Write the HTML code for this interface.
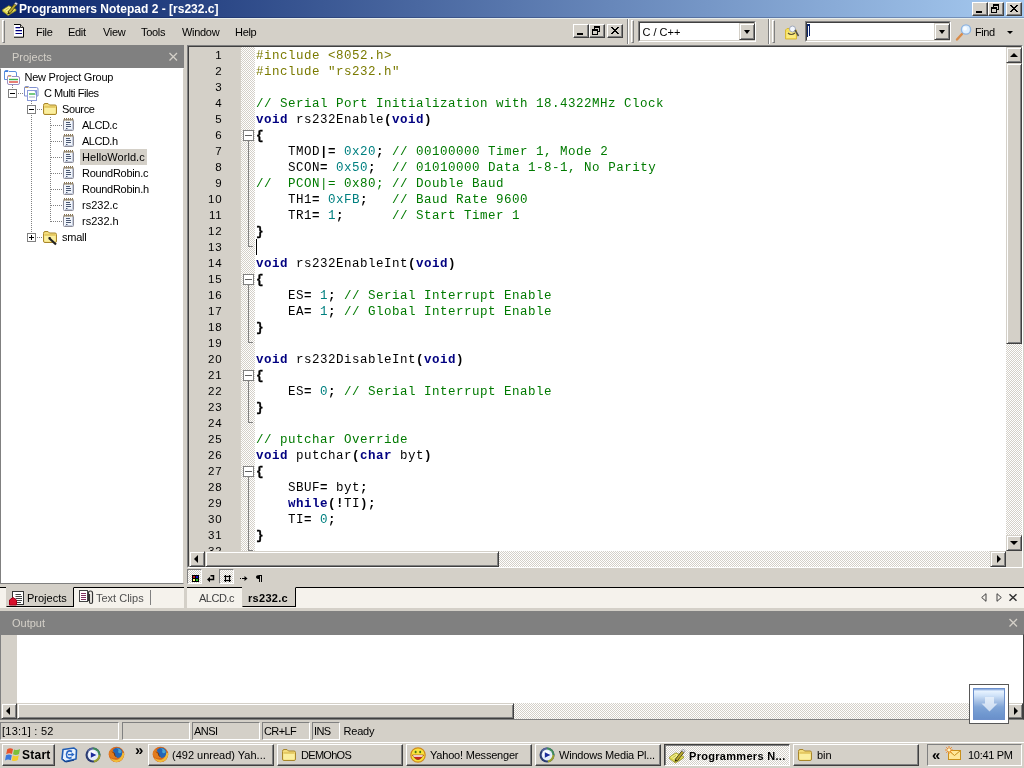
<!DOCTYPE html>
<html>
<head>
<meta charset="utf-8">
<title>Programmers Notepad 2 - [rs232.c]</title>
<style>
*{box-sizing:border-box;margin:0;padding:0}
html,body{width:1024px;height:768px;overflow:hidden;background:#d4d0c8}
body{font-family:"Liberation Sans",sans-serif;font-size:11px;color:#000;position:relative}
.a{position:absolute}
svg{position:absolute;overflow:visible}
.t{position:absolute;white-space:pre;line-height:14px;height:14px}
#title{left:0;top:0;width:1024px;height:18px;background:linear-gradient(90deg,#0a246a 0%,#a6caf0 100%)}
.btn{position:absolute;width:16px;height:14px;background:#d4d0c8;border:1px solid;border-color:#fff #404040 #404040 #fff;box-shadow:inset -1px -1px 0 #808080}
.sbtn{position:absolute;width:16px;height:16px;background:#d4d0c8;border:1px solid;border-color:#d4d0c8 #404040 #404040 #d4d0c8;box-shadow:inset 1px 1px 0 #fff,inset -1px -1px 0 #808080}
.chk{background-image:conic-gradient(#fff 25%,#d4d0c8 0 50%,#fff 0 75%,#d4d0c8 0);background-size:2px 2px}
.pane{position:absolute;top:722px;height:18px;border:1px solid;border-color:#808080 #fff #fff #808080}
.tb{position:absolute;top:744px;height:22px;background:#d4d0c8;border:1px solid;border-color:#fff #404040 #404040 #fff;box-shadow:inset -1px -1px 0 #808080}
.tb .t{top:4px;left:23px}
.grip{position:absolute;width:3px;border:1px solid;border-color:#fff #808080 #808080 #fff;background:#d4d0c8}
#code{left:256px;top:47.5px;font-family:"Liberation Mono",monospace;font-size:12.5px;letter-spacing:0.5px;line-height:16px;white-space:pre;color:#000}
#code .p{color:#7a7a00}
#code .c{color:#007a00}
#code .k{color:#000080;font-weight:bold}
#code .n{color:#008080}
#code b{font-weight:bold}
#code .br{-webkit-text-stroke:0.35px #000}
#ln{left:189px;top:47px;width:33.3px;text-align:right;font-size:11.5px;letter-spacing:0.7px;line-height:16px;white-space:pre}
.row{position:absolute;height:16px;line-height:16px;white-space:pre;font-size:11px;letter-spacing:-0.25px}
.dv{position:absolute;width:1px;background-image:linear-gradient(#808080 50%,transparent 0);background-size:1px 2px}
.dh{position:absolute;height:1px;background-image:linear-gradient(90deg,#808080 50%,transparent 0);background-size:2px 1px}
.box{position:absolute;width:9px;height:9px;border:1px solid #808080;background:#fff}
.box i{position:absolute;left:1px;top:3px;width:5px;height:1px;background:#000}
.box u{position:absolute;left:3px;top:1px;width:1px;height:5px;background:#000}
.fold{position:absolute;left:243px;width:11px;height:11px;border:1px solid #808080;background:#fff}
.fold i{position:absolute;left:1px;top:4px;width:7px;height:1px;background:#606060}
</style>
</head>
<body>
<div id="root" style="position:absolute;left:0;top:0;width:1024px;height:768px;will-change:transform">
<div id="title" class="a"><div class="a" style="left:0;top:17px;width:1024px;height:1px;background:rgba(10,20,70,0.28)"></div><svg style="left:2px;top:1px" width="15.5" height="15.5" viewBox="0 0 16 16">
<path d="M0.5 9 L7 4.8 L14.5 8.6 L14.5 10 L6.3 15 L0.5 10.6Z" fill="#dcd648" stroke="#8a8420" stroke-width=".7"/>
<path d="M1.6 9.1 L7 5.8 L13.2 8.8 L6.5 12.8Z" fill="#f4f08c"/>
<path d="M3.5 9.6 L7 7.4 M5.4 11 L9.8 8.3" stroke="#b4ae3c" stroke-width=".8"/>
<path d="M6.3 11.4 L12.8 2.9 L15 4.4 L8.4 12.9Z" fill="#b8a82e" stroke="#3a3410" stroke-width=".8"/>
<path d="M12.8 2.9 L14 1.2 L16.2 2.7 L15 4.4Z" fill="#e8e6f0" stroke="#6a6a7a" stroke-width=".5"/>
<path d="M6.3 11.4 L5.5 13.8 L8.4 12.9Z" fill="#2a2408"/>
</svg><div class="t" style="left:19px;top:2px;color:#fff;font-weight:bold;font-size:12px">Programmers Notepad 2 - [rs232.c]</div><div class="btn" style="left:972px;top:2px"><div class="a" style="left:3px;top:8px;width:6px;height:2px;background:#000"></div></div><div class="btn" style="left:988px;top:2px"><div class="a" style="left:4px;top:1px;width:6px;height:6px;border:1px solid #000;border-top-width:2px"></div><div class="a" style="left:2px;top:4px;width:6px;height:6px;border:1px solid #000;border-top-width:2px;background:#d4d0c8"></div></div><div class="btn" style="left:1006px;top:2px"><svg style="left:3px;top:2px" width="8" height="7" viewBox="0 0 8 7"><path d="M0.5 0 L7.5 7 M1.5 0 L8.5 7 M7.5 0 L0.5 7 M8.5 0 L1.5 7" stroke="#000" stroke-width="1" transform="translate(-0.5,0)"/></svg></div></div>
<div id="menubar" class="a" style="left:0;top:18px;width:1024px;height:27px;background:#d4d0c8"><div class="a" style="left:0;top:0;width:1024px;height:1px;background:#e9eeea"></div><div class="grip" style="left:2px;top:2px;height:23px"></div><svg style="left:14px;top:6px" width="11" height="14" viewBox="0 0 11 14"><path d="M0 0.5 H6.5 L9.5 3.5 V13 H0 Z" fill="#fff"/><path d="M0 0.5 H6.5 L9.5 3.5 V13.2 H0" fill="none" stroke="#000" stroke-width="1"/><path d="M6.5 0.5 V3.5 H9.5" fill="#d4d0c8" stroke="#000" stroke-width="0.8"/><path d="M1.5 3.7 H6 M1.5 6.6 H8 M1.5 9.5 H8" stroke="#000080" stroke-width="1.2"/></svg><div class="t" style="left:36px;top:7px;letter-spacing:-0.3px">File</div><div class="t" style="left:68px;top:7px;letter-spacing:-0.3px">Edit</div><div class="t" style="left:103px;top:7px;letter-spacing:-0.3px">View</div><div class="t" style="left:141px;top:7px;letter-spacing:-0.3px">Tools</div><div class="t" style="left:182px;top:7px;letter-spacing:-0.3px">Window</div><div class="t" style="left:235px;top:7px;letter-spacing:-0.3px">Help</div><div class="btn" style="left:573px;top:6px"><div class="a" style="left:3px;top:8px;width:6px;height:2px;background:#000"></div></div><div class="btn" style="left:589px;top:6px"><div class="a" style="left:4px;top:1px;width:6px;height:6px;border:1px solid #000;border-top-width:2px"></div><div class="a" style="left:2px;top:4px;width:6px;height:6px;border:1px solid #000;border-top-width:2px;background:#d4d0c8"></div></div><div class="btn" style="left:607px;top:6px"><svg style="left:3px;top:2px" width="8" height="7" viewBox="0 0 8 7"><path d="M0.5 0 L7.5 7 M1.5 0 L8.5 7 M7.5 0 L0.5 7 M8.5 0 L1.5 7" stroke="#000" stroke-width="1" transform="translate(-0.5,0)"/></svg></div><div class="a" style="left:627px;top:1px;width:2px;height:25px;border-left:1px solid #808080;border-right:1px solid #fff"></div><div class="grip" style="left:631px;top:2px;height:23px"></div><div class="a" style="left:768px;top:1px;width:2px;height:25px;border-left:1px solid #808080;border-right:1px solid #fff"></div><div class="grip" style="left:772px;top:2px;height:23px"></div><div class="a" style="left:638px;top:3px;width:118px;height:21px;background:#fff;border:1px solid;border-color:#808080 #fff #fff #808080"><div class="a" style="left:0;top:0;right:0;bottom:0;border:1px solid;border-color:#404040 #d4d0c8 #d4d0c8 #404040"></div><div class="t" style="left:3.5px;top:3px">C / C++</div><div class="sbtn" style="right:0px;top:1px;width:16px;height:17px"><div class="a" style="left:4px;top:6px;width:0;height:0;border:3.5px solid transparent;border-top:4px solid #000;border-bottom:0"></div></div></div><div class="a" style="left:805px;top:3px;width:146px;height:21px;background:#fff;border:1px solid;border-color:#808080 #fff #fff #808080"><div class="a" style="left:0;top:0;right:0;bottom:0;border:1px solid;border-color:#404040 #d4d0c8 #d4d0c8 #404040"></div><div class="t" style="left:3.5px;top:3px"></div><div class="sbtn" style="right:0px;top:1px;width:16px;height:17px"><div class="a" style="left:4px;top:6px;width:0;height:0;border:3.5px solid transparent;border-top:4px solid #000;border-bottom:0"></div></div></div><div class="a" style="left:807px;top:6px;width:1px;height:13px;background:#0a246a"></div><div class="a" style="left:807px;top:6px;width:3px;height:2px;background:#0a246a"></div><div class="a" style="left:809px;top:8px;width:1px;height:10px;background:#0a246a"></div><svg style="left:784px;top:6px" width="16" height="16" viewBox="0 0 16 16"><path d="M1.5 6 L3 4.5 H6 L7 6 H12.5 V15 H1.5 Z" fill="#f6e05a" stroke="#d8b838" stroke-width="1"/><path d="M2.5 8 H11.5 V14 H2.5Z" fill="#fbea7c"/><circle cx="8.5" cy="5" r="3" fill="#f4f8ff" stroke="#a0a8b8" stroke-width="1"/><path d="M4 9 Q7 12 11 9" stroke="#5a5030" stroke-width="1.2" fill="none"/><path d="M11 6 L14.5 12" stroke="#50504a" stroke-width="1.5"/></svg><svg style="left:955px;top:5px" width="18" height="18" viewBox="0 0 18 18"><path d="M7 11 L2 16.5" stroke="#d98c4a" stroke-width="2.4" stroke-linecap="round"/><circle cx="11" cy="6.5" r="4.6" fill="#dff0ff" stroke="#8fb4e0" stroke-width="1.4"/><circle cx="10" cy="5.5" r="2" fill="#fff" opacity=".8"/></svg><div class="t" style="left:975px;top:7px;letter-spacing:-0.4px">Find</div><div class="a" style="left:1007px;top:13px;width:0;height:0;border:3px solid transparent;border-top:3px solid #000;border-bottom:0"></div></div>
<div id="projhdr" class="a" style="left:0;top:45px;width:184px;height:23px;background:#808080"><div class="t" style="left:12px;top:5px;color:#d4d0c8">Projects</div><svg style="left:169px;top:8px" width="9" height="8" viewBox="0 0 9 8"><path d="M0.5 0 L8 7.5 M8 0 L0.5 7.5" stroke="#d4d0c8" stroke-width="1.3"/></svg></div>
<div id="tree" class="a" style="left:0;top:68px;width:184px;height:516px;background:#fff;border:1px solid;border-color:#fff #d4d0c8 #808080 #808080"></div>
<div class="dv" style="left:12px;top:85px;height:4px"></div><div class="dh" style="left:18px;top:93px;width:6px"></div><div class="dv" style="left:31px;top:101px;height:4px"></div><div class="dv" style="left:31px;top:115px;height:118px"></div><div class="dh" style="left:37px;top:109px;width:5px"></div><div class="dh" style="left:37px;top:237px;width:5px"></div><div class="dv" style="left:50px;top:117px;height:105px"></div><div class="dh" style="left:51px;top:125px;width:11px"></div><div class="dh" style="left:51px;top:141px;width:11px"></div><div class="dh" style="left:51px;top:157px;width:11px"></div><div class="dh" style="left:51px;top:173px;width:11px"></div><div class="dh" style="left:51px;top:189px;width:11px"></div><div class="dh" style="left:51px;top:205px;width:11px"></div><div class="dh" style="left:51px;top:221px;width:11px"></div><svg style="left:4px;top:70px" width="16" height="15" viewBox="0 0 16 15">
<path d="M0.5 2 Q0.5 0.5 2 0.5 L4 0.5 L5 1.5 L11 1.5 Q12.5 1.5 12.5 3 L12.5 9.5 L0.5 9.5 Z" fill="#fff" stroke="#5b8fdc" stroke-width="1"/>
<path d="M1 1 H4 V2 H1Z" fill="#3f7be0"/>
<path d="M3.5 6.5 Q3.5 5.5 5 5.5 L7 5.5 L8 6.5 L14 6.5 Q15.5 6.5 15.5 8 L15.5 13 Q15.5 14.5 14 14.5 L5 14.5 Q3.5 14.5 3.5 13 Z" fill="#fff" stroke="#9a8fc0" stroke-width="1"/>
<path d="M4 5.8 H7 V6.6 H4Z" fill="#f09a3a"/>
<path d="M5 9.5 H14" stroke="#3cb34a" stroke-width="1.4"/>
<path d="M5 12 H14" stroke="#e0483c" stroke-width="1.4"/>
</svg><div class="row" style="left:22.5px;top:69px;padding:0 2px;letter-spacing:-0.25px">New Project Group</div><div class="box" style="left:8px;top:89px"><i></i></div><svg style="left:24px;top:86px" width="15" height="15" viewBox="0 0 15 15">
<path d="M0.5 2 Q0.5 0.5 2 0.5 L4.5 0.5 L5.5 1.5 L12.5 1.5 Q14 1.5 14 3 L14 10 L0.5 10 Z" fill="#fff" stroke="#7f8fd0" stroke-width="1"/>
<path d="M1 1 H4.5 V2 H1Z" fill="#b79a6a"/>
<rect x="3.5" y="4.5" width="9" height="10" fill="#fff" stroke="#8a9ad8" stroke-width="1"/>
<path d="M5 8 H11" stroke="#3cb34a" stroke-width="1.4"/>
<path d="M5 11 H11" stroke="#b0b8d0" stroke-width="1.2"/>
<path d="M11 5 Q13 7 12 9" stroke="#6a86d8" stroke-width="1" fill="none"/>
</svg><div class="row" style="left:42px;top:85px;padding:0 2px;letter-spacing:-0.45px">C Multi Files</div><div class="box" style="left:27px;top:105px"><i></i></div><svg style="left:42px;top:102px" width="16" height="14" viewBox="0 0 16 14">
<path d="M1.5 3.5 Q1.5 1.5 3 1.5 L6 1.5 L7.5 3 L13 3 Q14.5 3 14.5 4.5 L14.5 11 Q14.5 12.5 13 12.5 L3 12.5 Q1.5 12.5 1.5 11 Z" fill="#f3dc7b" stroke="#a8862a" stroke-width="1"/>
<path d="M2.5 5.5 L13.5 5.5 L13.5 11 Q13.5 11.6 13 11.6 L3 11.6 Q2.5 11.6 2.5 11 Z" fill="#fbef9f"/>
<path d="M2.5 5 L13.5 5" stroke="#d7b549" stroke-width="1"/>
</svg><div class="row" style="left:60px;top:101px;padding:0 2px;letter-spacing:-0.4px">Source</div><svg style="left:62px;top:117px" width="13" height="15" viewBox="0 0 13 15">
<rect x="1.5" y="2.5" width="10" height="11" rx="1" fill="#f1f5fc" stroke="#8c8c98" stroke-width="1"/>
<path d="M10.5 4 V12.5 H3" stroke="#c3cbdc" stroke-width="1" fill="none"/>
<path d="M2.5 1 V3.5 M4.5 1 V3.5 M6.5 1 V3.5 M8.5 1 V3.5 M10.5 1 V3.5" stroke="#85724e" stroke-width="1"/>
<path d="M1.5 3 H11.5" stroke="#a89a80" stroke-width="1"/>
<path d="M4 5.5 H8 M4 7.5 H9 M4 9.5 H9 M4 11.5 H5.5" stroke="#4a5872" stroke-width="1"/>
</svg><div class="row" style="left:80px;top:117px;padding:0 2px;letter-spacing:-0.5px">ALCD.c</div><svg style="left:62px;top:133px" width="13" height="15" viewBox="0 0 13 15">
<rect x="1.5" y="2.5" width="10" height="11" rx="1" fill="#f1f5fc" stroke="#8c8c98" stroke-width="1"/>
<path d="M10.5 4 V12.5 H3" stroke="#c3cbdc" stroke-width="1" fill="none"/>
<path d="M2.5 1 V3.5 M4.5 1 V3.5 M6.5 1 V3.5 M8.5 1 V3.5 M10.5 1 V3.5" stroke="#85724e" stroke-width="1"/>
<path d="M1.5 3 H11.5" stroke="#a89a80" stroke-width="1"/>
<path d="M4 5.5 H8 M4 7.5 H9 M4 9.5 H9 M4 11.5 H5.5" stroke="#4a5872" stroke-width="1"/>
</svg><div class="row" style="left:80px;top:133px;padding:0 2px;letter-spacing:-0.5px">ALCD.h</div><svg style="left:62px;top:149px" width="13" height="15" viewBox="0 0 13 15">
<rect x="1.5" y="2.5" width="10" height="11" rx="1" fill="#f1f5fc" stroke="#8c8c98" stroke-width="1"/>
<path d="M10.5 4 V12.5 H3" stroke="#c3cbdc" stroke-width="1" fill="none"/>
<path d="M2.5 1 V3.5 M4.5 1 V3.5 M6.5 1 V3.5 M8.5 1 V3.5 M10.5 1 V3.5" stroke="#85724e" stroke-width="1"/>
<path d="M1.5 3 H11.5" stroke="#a89a80" stroke-width="1"/>
<path d="M4 5.5 H8 M4 7.5 H9 M4 9.5 H9 M4 11.5 H5.5" stroke="#4a5872" stroke-width="1"/>
</svg><div class="row" style="left:80px;top:149px;padding:0 2px;background:#d4d0c8;letter-spacing:0.05px">HelloWorld.c</div><svg style="left:62px;top:165px" width="13" height="15" viewBox="0 0 13 15">
<rect x="1.5" y="2.5" width="10" height="11" rx="1" fill="#f1f5fc" stroke="#8c8c98" stroke-width="1"/>
<path d="M10.5 4 V12.5 H3" stroke="#c3cbdc" stroke-width="1" fill="none"/>
<path d="M2.5 1 V3.5 M4.5 1 V3.5 M6.5 1 V3.5 M8.5 1 V3.5 M10.5 1 V3.5" stroke="#85724e" stroke-width="1"/>
<path d="M1.5 3 H11.5" stroke="#a89a80" stroke-width="1"/>
<path d="M4 5.5 H8 M4 7.5 H9 M4 9.5 H9 M4 11.5 H5.5" stroke="#4a5872" stroke-width="1"/>
</svg><div class="row" style="left:80px;top:165px;padding:0 2px;letter-spacing:-0.3px">RoundRobin.c</div><svg style="left:62px;top:181px" width="13" height="15" viewBox="0 0 13 15">
<rect x="1.5" y="2.5" width="10" height="11" rx="1" fill="#f1f5fc" stroke="#8c8c98" stroke-width="1"/>
<path d="M10.5 4 V12.5 H3" stroke="#c3cbdc" stroke-width="1" fill="none"/>
<path d="M2.5 1 V3.5 M4.5 1 V3.5 M6.5 1 V3.5 M8.5 1 V3.5 M10.5 1 V3.5" stroke="#85724e" stroke-width="1"/>
<path d="M1.5 3 H11.5" stroke="#a89a80" stroke-width="1"/>
<path d="M4 5.5 H8 M4 7.5 H9 M4 9.5 H9 M4 11.5 H5.5" stroke="#4a5872" stroke-width="1"/>
</svg><div class="row" style="left:80px;top:181px;padding:0 2px;letter-spacing:-0.3px">RoundRobin.h</div><svg style="left:62px;top:197px" width="13" height="15" viewBox="0 0 13 15">
<rect x="1.5" y="2.5" width="10" height="11" rx="1" fill="#f1f5fc" stroke="#8c8c98" stroke-width="1"/>
<path d="M10.5 4 V12.5 H3" stroke="#c3cbdc" stroke-width="1" fill="none"/>
<path d="M2.5 1 V3.5 M4.5 1 V3.5 M6.5 1 V3.5 M8.5 1 V3.5 M10.5 1 V3.5" stroke="#85724e" stroke-width="1"/>
<path d="M1.5 3 H11.5" stroke="#a89a80" stroke-width="1"/>
<path d="M4 5.5 H8 M4 7.5 H9 M4 9.5 H9 M4 11.5 H5.5" stroke="#4a5872" stroke-width="1"/>
</svg><div class="row" style="left:80px;top:197px;padding:0 2px;letter-spacing:0px">rs232.c</div><svg style="left:62px;top:213px" width="13" height="15" viewBox="0 0 13 15">
<rect x="1.5" y="2.5" width="10" height="11" rx="1" fill="#f1f5fc" stroke="#8c8c98" stroke-width="1"/>
<path d="M10.5 4 V12.5 H3" stroke="#c3cbdc" stroke-width="1" fill="none"/>
<path d="M2.5 1 V3.5 M4.5 1 V3.5 M6.5 1 V3.5 M8.5 1 V3.5 M10.5 1 V3.5" stroke="#85724e" stroke-width="1"/>
<path d="M1.5 3 H11.5" stroke="#a89a80" stroke-width="1"/>
<path d="M4 5.5 H8 M4 7.5 H9 M4 9.5 H9 M4 11.5 H5.5" stroke="#4a5872" stroke-width="1"/>
</svg><div class="row" style="left:80px;top:213px;padding:0 2px;letter-spacing:0px">rs232.h</div><div class="box" style="left:27px;top:233px"><i></i><u></u></div><svg style="left:42px;top:230px" width="16" height="14" viewBox="0 0 16 14">
<path d="M1.5 3.5 Q1.5 1.5 3 1.5 L6 1.5 L7.5 3 L13 3 Q14.5 3 14.5 4.5 L14.5 11 Q14.5 12.5 13 12.5 L3 12.5 Q1.5 12.5 1.5 11 Z" fill="#f3dc7b" stroke="#a8862a" stroke-width="1"/>
<path d="M2.5 5.5 L13.5 5.5 L13.5 11 Q13.5 11.6 13 11.6 L3 11.6 Q2.5 11.6 2.5 11 Z" fill="#fbef9f"/>
<path d="M2.5 5 L13.5 5" stroke="#d7b549" stroke-width="1"/>
</svg><svg style="left:48px;top:236px" width="10" height="10" viewBox="0 0 10 10"><path d="M1 2 L8 8.5" stroke="#222" stroke-width="2.2"/><path d="M0.5 1 L3 1 L1 3.5Z" fill="#222"/></svg><div class="row" style="left:60px;top:229px;padding:0 2px">small</div><div class="a" style="left:0;top:587px;width:184px;height:21px;background:#f5f2ec"></div><div class="a" style="left:73px;top:587px;width:111px;height:1px;background:#000"></div><div class="a" style="left:0;top:587px;width:6px;height:1px;background:#000"></div><div class="a" style="left:6px;top:587px;width:68px;height:20px;background:#d4d0c8;border:1px solid;border-color:#d4d0c8 #000 #000 #d4d0c8"></div><svg style="left:9px;top:590px" width="16" height="16" viewBox="0 0 16 16"><rect x="3.5" y="1.5" width="11" height="13" fill="#fff" stroke="#333" stroke-width="1"/><path d="M6.5 4.5 H12 M6.5 6.5 H13 M6.5 8.5 H13 M8 10.5 H13 M8 12.5 H12" stroke="#444" stroke-width="1"/><path d="M0.5 15 V10 L4 7.5 L7.5 10 V15 Z" fill="#d8102c" stroke="#a00018" stroke-width="1"/></svg><div class="t" style="left:27px;top:591px">Projects</div><svg style="left:79px;top:589px" width="16" height="16" viewBox="0 0 16 16"><rect x="0.5" y="1.5" width="8" height="11" fill="#fff" stroke="#444" stroke-width="1"/><path d="M2 4.5 H7 M2 6.5 H7 M2 8.5 H7 M2 10.5 H7" stroke="#803060" stroke-width="1"/><path d="M9.5 12 V4 Q9.5 2 11.5 2 Q13.5 2 13.5 4 V13 Q13.5 14.5 12 14.5 Q10.5 14.5 10.5 13 V5" fill="none" stroke="#333" stroke-width="1.2"/></svg><div class="t" style="left:96px;top:591px;color:#505050">Text Clips</div><div class="a" style="left:150px;top:590px;width:1px;height:15px;background:#808080"></div><div id="editor" class="a" style="left:187px;top:45px;width:836px;height:523px;background:#fff;border:1px solid;border-color:#808080 #fff #fff #808080"><div class="a" style="left:0;top:0;right:0;bottom:0;border:1px solid;border-color:#404040 #d4d0c8 #d4d0c8 #404040"></div></div>
<div class="a" style="left:189px;top:47px;width:52px;height:504px;background:#d4d0c8"></div><div class="a chk" style="left:241px;top:47px;width:14px;height:504px"></div><div class="a" style="left:248px;top:135px;width:1px;height:111px;background:#808080"></div><div class="a" style="left:248px;top:246px;width:5px;height:1px;background:#808080"></div><div class="fold" style="top:130px"><i></i></div><div class="a" style="left:248px;top:279px;width:1px;height:63px;background:#808080"></div><div class="a" style="left:248px;top:342px;width:5px;height:1px;background:#808080"></div><div class="fold" style="top:274px"><i></i></div><div class="a" style="left:248px;top:375px;width:1px;height:47px;background:#808080"></div><div class="a" style="left:248px;top:422px;width:5px;height:1px;background:#808080"></div><div class="fold" style="top:370px"><i></i></div><div class="a" style="left:248px;top:471px;width:1px;height:79px;background:#808080"></div><div class="a" style="left:248px;top:550px;width:5px;height:1px;background:#808080"></div><div class="fold" style="top:466px"><i></i></div><div id="ln" class="a">1
2
3
4
5
6
7
8
9
10
11
12
13
14
15
16
17
18
19
20
21
22
23
24
25
26
27
28
29
30
31
32</div><div id="code" class="a"><span class="p">#include &lt;8052.h&gt;</span>
<span class="p">#include "rs232.h"</span>

<span class="c">// Serial Port Initialization with 18.4322MHz Clock</span>
<span class="k">void</span> rs232Enable<b>(</b><span class="k">void</span><b>)</b>
<b class="br">{</b>
    TMOD<b>|=</b> <span class="n">0x20</span><b>;</b> <span class="c">// 00100000 Timer 1, Mode 2</span>
    SCON<b>=</b> <span class="n">0x50</span><b>;</b>  <span class="c">// 01010000 Data 1-8-1, No Parity</span>
<span class="c">//  PCON|= 0x80; // Double Baud</span>
    TH1<b>=</b> <span class="n">0xFB</span><b>;</b>   <span class="c">// Baud Rate 9600</span>
    TR1<b>=</b> <span class="n">1</span><b>;</b>      <span class="c">// Start Timer 1</span>
<b class="br">}</b>

<span class="k">void</span> rs232EnableInt<b>(</b><span class="k">void</span><b>)</b>
<b class="br">{</b>
    ES<b>=</b> <span class="n">1</span><b>;</b> <span class="c">// Serial Interrupt Enable</span>
    EA<b>=</b> <span class="n">1</span><b>;</b> <span class="c">// Global Interrupt Enable</span>
<b class="br">}</b>

<span class="k">void</span> rs232DisableInt<b>(</b><span class="k">void</span><b>)</b>
<b class="br">{</b>
    ES<b>=</b> <span class="n">0</span><b>;</b> <span class="c">// Serial Interrupt Enable</span>
<b class="br">}</b>

<span class="c">// putchar Override</span>
<span class="k">void</span> putchar<b>(</b><span class="k">char</span> byt<b>)</b>
<b class="br">{</b>
    SBUF<b>=</b> byt<b>;</b>
    <span class="k">while</span><b>(!</b>TI<b>);</b>
    TI<b>=</b> <span class="n">0</span><b>;</b>
<b class="br">}</b>
</div><div class="a" style="left:256px;top:239px;width:1px;height:16px;background:#000"></div><div class="a chk" style="left:1006px;top:47px;width:16px;height:504px"></div><div class="sbtn" style="left:1006px;top:47px"><div class="a" style="left:3px;top:5px;width:0;height:0;border:4px solid transparent;border-bottom:4px solid #000;border-top:0"></div></div><div class="sbtn" style="left:1006px;top:63px;height:281px"></div><div class="sbtn" style="left:1006px;top:535px"><div class="a" style="left:3px;top:5px;width:0;height:0;border:4px solid transparent;border-top:4px solid #000;border-bottom:0"></div></div><div class="a chk" style="left:189px;top:551px;width:817px;height:16px"></div><div class="a" style="left:1006px;top:551px;width:16px;height:16px;background:#d4d0c8"></div><div class="sbtn" style="left:189px;top:551px"><div class="a" style="left:4px;top:3px;width:0;height:0;border:4px solid transparent;border-right:4px solid #000;border-left:0"></div></div><div class="sbtn" style="left:205px;top:551px;width:294px"></div><div class="sbtn" style="left:990px;top:551px"><div class="a" style="left:6px;top:3px;width:0;height:0;border:4px solid transparent;border-left:4px solid #000;border-right:0"></div></div><div class="a chk" style="left:187px;top:569px;width:15px;height:15px;border:1px solid;border-color:#808080 #fff #fff #808080"></div><div class="a" style="left:192px;top:575px;width:7px;height:7px;background:#000"><div class="a" style="left:1px;top:1px;width:2px;height:2px;background:#c02020"></div><div class="a" style="left:4px;top:1px;width:2px;height:2px;background:#1010c0"></div><div class="a" style="left:1px;top:4px;width:2px;height:2px;background:#ffff80"></div><div class="a" style="left:4px;top:4px;width:2px;height:2px;background:#20c020"></div></div><svg style="left:207px;top:575px" width="8" height="7" viewBox="0 0 8 7"><path d="M2 4.5 H6.5 V0.75 H3.5" fill="none" stroke="#000" stroke-width="1.5"/><path d="M0 4.5 L3 1.8 V7.2Z" fill="#000"/></svg><div class="a chk" style="left:219px;top:569px;width:15px;height:15px;border:1px solid;border-color:#808080 #fff #fff #808080"></div><svg style="left:224px;top:575px" width="7" height="7" viewBox="0 0 7 7"><path d="M1.5 0 V7 M5.5 0 V7 M0 1.5 H7 M0 5.5 H7" stroke="#000" stroke-width="1"/><path d="M1.5 0 V7 M5.5 0 V7 M0 1.5 H7 M0 5.5 H7" stroke="#000" stroke-width="1.6" opacity=".35"/></svg><svg style="left:240px;top:576px" width="8" height="5" viewBox="0 0 8 5"><path d="M0 2.5 H1 M2 2.5 H6" stroke="#000" stroke-width="1"/><path d="M4.5 0 L7.5 2.5 L4.5 5Z" fill="#000"/></svg><svg style="left:256px;top:575px" width="6" height="7" viewBox="0 0 6 7"><path d="M3 0.5 H6 M3.5 0 V7 M5.5 0 V7" stroke="#000" stroke-width="1"/><path d="M3.5 0 Q0 0 0 2 Q0 4 3.5 4Z" fill="#000"/></svg><div class="a" style="left:187px;top:587px;width:837px;height:21px;background:#f5f2ec"></div><div class="a" style="left:295px;top:587px;width:729px;height:1px;background:#000"></div><div class="a" style="left:187px;top:587px;width:55px;height:1px;background:#000"></div><div class="a" style="left:242px;top:587px;width:54px;height:20px;background:#d4d0c8;border:1px solid;border-color:#d4d0c8 #000 #000 #d4d0c8"></div><div class="t" style="left:199px;top:591px;color:#404040;letter-spacing:-0.5px">ALCD.c</div><div class="t" style="left:248px;top:591px;font-weight:bold;letter-spacing:0.3px">rs232.c</div><svg style="left:981px;top:593px" width="6" height="9" viewBox="0 0 6 9"><path d="M5 0.7 V8.3 L0.7 4.5Z" fill="none" stroke="#404040" stroke-width="1"/></svg><svg style="left:996px;top:593px" width="6" height="9" viewBox="0 0 6 9"><path d="M1 0.7 V8.3 L5.3 4.5Z" fill="none" stroke="#404040" stroke-width="1"/></svg><svg style="left:1009px;top:594px" width="8" height="7" viewBox="0 0 8 7"><path d="M0.5 0.3 L7.5 6.7 M7.5 0.3 L0.5 6.7" stroke="#303030" stroke-width="1.5"/></svg><div id="outhdr" class="a" style="left:0;top:611px;width:1024px;height:23px;background:#808080"><div class="t" style="left:12px;top:5px;color:#d4d0c8">Output</div><svg style="left:1009px;top:8px" width="9" height="8" viewBox="0 0 9 8"><path d="M0.5 0 L8 7.5 M8 0 L0.5 7.5" stroke="#d4d0c8" stroke-width="1.3"/></svg></div>
<div id="out" class="a" style="left:0;top:634px;width:1024px;height:86px;background:#fff;border:1px solid;border-color:#808080 #404040 #808080 #808080"></div><div class="a" style="left:1px;top:635px;width:16px;height:68px;background:#d4d0c8"></div><div class="a chk" style="left:1px;top:703px;width:1022px;height:16px"></div><div class="sbtn" style="left:1px;top:703px"><div class="a" style="left:4px;top:3px;width:0;height:0;border:4px solid transparent;border-right:4px solid #000;border-left:0"></div></div><div class="sbtn" style="left:17px;top:703px;width:497px"></div><div class="sbtn" style="left:1007px;top:703px"><div class="a" style="left:6px;top:3px;width:0;height:0;border:4px solid transparent;border-left:4px solid #000;border-right:0"></div></div><div class="a" style="left:969px;top:684px;width:40px;height:40px;background:#fff;border:1px solid #585858"><div class="a" style="left:3px;top:3px;width:32px;height:32px;background:linear-gradient(#7a9fd8 0,#e8f3ff 7%,#cfe2f8 22%,#a9c3e6 40%,#7fa4d6 60%,#6f97cf 85%,#6a90ca 100%);border:1px solid #6c90cc;border-top-color:#6c90cc"></div><svg style="left:11px;top:12px" width="17" height="15" viewBox="0 0 17 15"><path d="M4 0 H13 V6.5 H16.5 L8.5 14.5 L0.5 6.5 H4Z" fill="#eef4fc" opacity=".75"/></svg></div><div class="pane" style="left:0px;width:119px"><div class="t" style="left:1px;top:1px;letter-spacing:0.25px">[13:1] : 52</div></div><div class="pane" style="left:122px;width:68px"><div class="t" style="left:1px;top:1px;letter-spacing:0px"></div></div><div class="pane" style="left:192px;width:68px"><div class="t" style="left:1px;top:1px;letter-spacing:-0.5px">ANSI</div></div><div class="pane" style="left:262px;width:48px"><div class="t" style="left:1px;top:1px;letter-spacing:-0.6px">CR+LF</div></div><div class="pane" style="left:312px;width:28px"><div class="t" style="left:1px;top:1px;letter-spacing:-0.6px">INS</div></div><div class="t" style="left:343.5px;top:724px;letter-spacing:-0.2px">Ready</div><div class="a" style="left:0;top:742px;width:1024px;height:1px;background:#fff"></div><div class="tb" style="left:2px;width:53px"><div class="t" style="left:19px;top:3px;font-weight:bold;font-size:12px;letter-spacing:0.25px">Start</div><svg style="left:2px;top:2px" width="16" height="16" viewBox="0 0 16 16"><path d="M2.2 2.2 Q5 0.2 8 2 L7 7 Q4.3 5.4 1.2 7.2Z" fill="#e8542c"/><path d="M9 2.4 Q12 4 15 2 L14 7 Q11 8.8 8 7.3Z" fill="#7cc03a"/><path d="M1 8.2 Q4 6.6 6.8 8.2 L5.8 13.2 Q3 11.6 0 13.4Z" fill="#3a78dc"/><path d="M7.8 8.5 Q10.8 10 13.8 8.2 L12.8 13 Q9.8 14.8 6.8 13.4Z" fill="#f4cc2c"/></svg></div><svg style="left:61px;top:747px" width="17" height="16" viewBox="0 0 17 16"><path d="M2 2.5 L13 1 L15.5 3 L15 12 L4 14.5 L1 12Z" fill="#eaf3fd" stroke="#1f5cb4" stroke-width="1.6" stroke-linejoin="round"/><path d="M11 4.6 Q8.5 3.2 6.4 4.8 Q4.6 7.5 6 10.2 Q8 11.8 10.6 10.6" stroke="#2a68c4" stroke-width="1.7" fill="none"/><path d="M7 7.6 H11.5" stroke="#2a68c4" stroke-width="1.4"/><path d="M10.5 5.2 L13.6 7.6 L10.5 9.8Z" fill="#2a68c4"/><path d="M2 12.5 L5 15 L13 13.2" stroke="#103c84" stroke-width="1" fill="none"/></svg><svg style="left:85px;top:747px" width="16" height="16" viewBox="0 0 16 16"><circle cx="8" cy="8" r="7.5" fill="#2c3c72"/><path d="M8 0.5 A7.5 7.5 0 0 1 15.5 8 L8 8Z" fill="#3f8a5a"/><path d="M15.5 8 A7.5 7.5 0 0 1 9 15.4 L8 8Z" fill="#9aa030"/><path d="M2.2 3.5 A7.5 7.5 0 0 1 8 0.5 L8 8Z" fill="#55649a"/><circle cx="8" cy="8" r="5.4" fill="#e4ecfb"/><circle cx="7.2" cy="7" r="3.4" fill="#fff" opacity=".8"/><path d="M5.8 5.2 L11.4 8 L5.8 10.8Z" fill="#1c2c9c"/></svg><svg style="left:108px;top:746px" width="17" height="17" viewBox="0 0 17 17"><circle cx="8.5" cy="8.5" r="7.8" fill="#d8681a"/><circle cx="9.4" cy="6.8" r="5.1" fill="#2466b6"/><path d="M8 2 Q11.5 3 10 6 Q11.5 8.4 13.8 6 Q13 2.6 8 2Z" fill="#4aa6d2"/><path d="M16.3 8 Q15.6 15 8.5 16.3 Q4 15.6 2.2 12 Q6 14.6 10 13.4 Q14 11.8 14.4 6.6 Q16 7 16.3 8Z" fill="#f0bc3a"/><path d="M0.8 8 Q1 4.4 4 2.6 Q4.4 5 6.2 6.6 Q5.4 9.8 9.4 11.6 Q6 13 3 11.6 Q1 10 0.8 8Z" fill="#e27c1e"/><path d="M4.2 5.6 Q5 7.2 6.6 7.3 Q6 9.2 8 10.8" stroke="#7a3208" stroke-width="1" fill="none"/></svg><div class="t" style="left:135px;top:743px;font-weight:bold;font-size:15px">»</div><div class="tb" style="left:148px;width:126px"><div class="t" style="left:23px;top:3px;letter-spacing:0px">(492 unread) Yah...</div></div><svg style="left:152px;top:746px" width="17" height="17" viewBox="0 0 17 17"><circle cx="8.5" cy="8.5" r="7.8" fill="#d8681a"/><circle cx="9.4" cy="6.8" r="5.1" fill="#2466b6"/><path d="M8 2 Q11.5 3 10 6 Q11.5 8.4 13.8 6 Q13 2.6 8 2Z" fill="#4aa6d2"/><path d="M16.3 8 Q15.6 15 8.5 16.3 Q4 15.6 2.2 12 Q6 14.6 10 13.4 Q14 11.8 14.4 6.6 Q16 7 16.3 8Z" fill="#f0bc3a"/><path d="M0.8 8 Q1 4.4 4 2.6 Q4.4 5 6.2 6.6 Q5.4 9.8 9.4 11.6 Q6 13 3 11.6 Q1 10 0.8 8Z" fill="#e27c1e"/><path d="M4.2 5.6 Q5 7.2 6.6 7.3 Q6 9.2 8 10.8" stroke="#7a3208" stroke-width="1" fill="none"/></svg><div class="tb" style="left:277px;width:126px"><div class="t" style="left:23px;top:3px;letter-spacing:-0.7px">DEMOhOS</div></div><svg style="left:281px;top:748px" width="16" height="14" viewBox="0 0 16 14">
<path d="M1.5 3.5 Q1.5 1.5 3 1.5 L6 1.5 L7.5 3 L13 3 Q14.5 3 14.5 4.5 L14.5 11 Q14.5 12.5 13 12.5 L3 12.5 Q1.5 12.5 1.5 11 Z" fill="#f3dc7b" stroke="#a8862a" stroke-width="1"/>
<path d="M2.5 5.5 L13.5 5.5 L13.5 11 Q13.5 11.6 13 11.6 L3 11.6 Q2.5 11.6 2.5 11 Z" fill="#fbef9f"/>
<path d="M2.5 5 L13.5 5" stroke="#d7b549" stroke-width="1"/>
</svg><div class="tb" style="left:406px;width:126px"><div class="t" style="left:23px;top:3px;letter-spacing:-0.2px">Yahoo! Messenger</div></div><svg style="left:410px;top:747px" width="16" height="16" viewBox="0 0 16 16"><circle cx="8" cy="8" r="7.2" fill="#f8e23c" stroke="#cf8a1c" stroke-width="1.2"/><path d="M2.4 8 Q8 17.5 13.6 8Z" fill="#c8281c" stroke="#8a3a10" stroke-width=".6"/><path d="M3 8.2 H13 L12.3 9.8 H3.7Z" fill="#fff"/><ellipse cx="5.6" cy="5" rx="1" ry="1.3" fill="#4a7a10"/><ellipse cx="10.2" cy="5" rx="1" ry="1.3" fill="#4a7a10"/></svg><div class="tb" style="left:535px;width:126px"><div class="t" style="left:23px;top:3px;letter-spacing:-0.2px">Windows Media Pl...</div></div><svg style="left:539px;top:747px" width="16" height="16" viewBox="0 0 16 16"><circle cx="8" cy="8" r="7.5" fill="#2c3c72"/><path d="M8 0.5 A7.5 7.5 0 0 1 15.5 8 L8 8Z" fill="#3f8a5a"/><path d="M15.5 8 A7.5 7.5 0 0 1 9 15.4 L8 8Z" fill="#9aa030"/><path d="M2.2 3.5 A7.5 7.5 0 0 1 8 0.5 L8 8Z" fill="#55649a"/><circle cx="8" cy="8" r="5.4" fill="#e4ecfb"/><circle cx="7.2" cy="7" r="3.4" fill="#fff" opacity=".8"/><path d="M5.8 5.2 L11.4 8 L5.8 10.8Z" fill="#1c2c9c"/></svg><div class="tb" style="left:664px;width:126px;border-color:#404040 #fff #fff #404040;box-shadow:inset 1px 1px 0 #808080;background-image:conic-gradient(#fff 25%,#d4d0c8 0 50%,#fff 0 75%,#d4d0c8 0);background-size:2px 2px"><div class="t" style="left:23px;top:3px;letter-spacing:0.3px;font-weight:bold;left:24px;top:4px">Programmers N...</div></div><svg style="left:669px;top:748px" width="16" height="16" viewBox="0 0 16 16">
<path d="M0.5 9 L7 4.8 L14.5 8.6 L14.5 10 L6.3 15 L0.5 10.6Z" fill="#dcd648" stroke="#8a8420" stroke-width=".7"/>
<path d="M1.6 9.1 L7 5.8 L13.2 8.8 L6.5 12.8Z" fill="#f4f08c"/>
<path d="M3.5 9.6 L7 7.4 M5.4 11 L9.8 8.3" stroke="#b4ae3c" stroke-width=".8"/>
<path d="M6.3 11.4 L12.8 2.9 L15 4.4 L8.4 12.9Z" fill="#b8a82e" stroke="#3a3410" stroke-width=".8"/>
<path d="M12.8 2.9 L14 1.2 L16.2 2.7 L15 4.4Z" fill="#e8e6f0" stroke="#6a6a7a" stroke-width=".5"/>
<path d="M6.3 11.4 L5.5 13.8 L8.4 12.9Z" fill="#2a2408"/>
</svg><div class="tb" style="left:793px;width:126px"><div class="t" style="left:23px;top:3px;letter-spacing:0px">bin</div></div><svg style="left:797px;top:748px" width="16" height="14" viewBox="0 0 16 14">
<path d="M1.5 3.5 Q1.5 1.5 3 1.5 L6 1.5 L7.5 3 L13 3 Q14.5 3 14.5 4.5 L14.5 11 Q14.5 12.5 13 12.5 L3 12.5 Q1.5 12.5 1.5 11 Z" fill="#f3dc7b" stroke="#a8862a" stroke-width="1"/>
<path d="M2.5 5.5 L13.5 5.5 L13.5 11 Q13.5 11.6 13 11.6 L3 11.6 Q2.5 11.6 2.5 11 Z" fill="#fbef9f"/>
<path d="M2.5 5 L13.5 5" stroke="#d7b549" stroke-width="1"/>
</svg><div class="a" style="left:927px;top:744px;width:95px;height:22px;border:1px solid;border-color:#808080 #fff #fff #808080"></div><div class="t" style="left:932px;top:748px;font-weight:bold;font-size:15px">«</div><svg style="left:944px;top:745px" width="18" height="16" viewBox="0 0 18 16"><rect x="4.5" y="5.5" width="12" height="9" fill="#ffe79a" stroke="#c8901c" stroke-width="1"/><path d="M4.5 5.5 L10.5 10.5 L16.5 5.5" fill="none" stroke="#c8901c" stroke-width="1"/><path d="M5 1 V9 M1 5 H9 M2.2 2.2 L7.8 7.8 M7.8 2.2 L2.2 7.8" stroke="#f08a28" stroke-width="1"/><circle cx="5" cy="5" r="1.5" fill="#fff6c0"/></svg><div class="t" style="left:968px;top:748px;letter-spacing:-0.3px">10:41 PM</div>
</div>
</body>
</html>
